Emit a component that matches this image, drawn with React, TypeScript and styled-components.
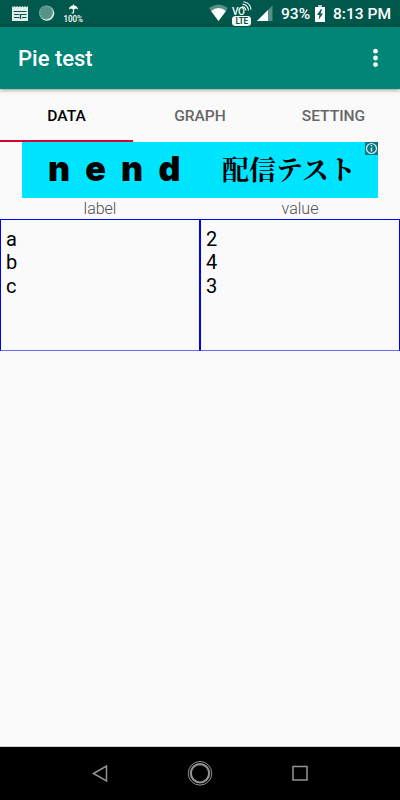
import React from "react";
import styled, { createGlobalStyle } from "styled-components";

const GlobalStyle = createGlobalStyle`
  * { box-sizing: border-box; }
  body { margin: 0; background: #fafafa; font-family: Roboto, sans-serif; }
`;

const Screen = styled.div`
  width: 400px;
  height: 800px;
  display: flex;
  flex-direction: column;
  overflow: hidden;
  background: #fafafa;
  color: #000;
`;

const StatusBar = styled.header`
  height: 27px;
  flex: none;
  display: flex;
  justify-content: space-between;
  background: #00574b;
  color: #fff;
`;

const StatusText = styled.span<{ $gap: number; $width: number }>`
  width: ${(p) => p.$width}px;
  margin-left: ${(p) => p.$gap}px;
  font-size: 15.55px;
  font-weight: 500;
  line-height: 29px;
  white-space: nowrap;
`;

const StatusGroup = styled.div`
  display: flex;
  height: 27px;
`;

const AppBar = styled.div`
  height: 62px;
  flex: none;
  display: flex;
  align-items: center;
  justify-content: space-between;
  padding: 0 20px 0 18px;
  background: #008577;
  color: #fff;
  box-shadow: 0 1px 4px rgba(0, 0, 0, 0.42);
`;

const Title = styled.h1`
  margin: 2px 0 0;
  font-size: 22px;
  font-weight: 500;
  line-height: 28px;
`;

const MenuButton = styled.button`
  display: flex;
  padding: 0;
  border: 0;
  background: none;
  color: #fff;
`;

const Tabs = styled.nav`
  height: 53px;
  flex: none;
  display: grid;
  grid-template-columns: 133px 134px 133px;
`;

const Tab = styled.button<{ $active?: boolean }>`
  padding: 3px 0 0;
  border: 0;
  border-bottom: 2px solid ${(p) => (p.$active ? "#dc0038" : "transparent")};
  background: none;
  color: ${(p) => (p.$active ? "#000" : "#666")};
  font: 500 15.55px/20px Roboto, sans-serif;
`;

const Banner = styled.section`
  position: relative;
  width: 356px;
  height: 56px;
  flex: none;
  margin-left: 22px;
  display: flex;
  background: #00e5ff;
`;

const BannerName = styled.span`
  width: 200px;
  padding-left: 26px;
  font: 900 34px/54px Inter, sans-serif;
  letter-spacing: 15.2px;
  white-space: nowrap;
`;

const BannerMessage = styled.span`
  font: 700 27px/54px "Noto Serif CJK JP", "Noto Sans CJK JP", serif;
  white-space: nowrap;
`;

const InfoBadge = styled.span`
  position: absolute;
  top: 0;
  right: 0;
  display: flex;
  background: #087785;
`;

const Columns = styled.main`
  display: grid;
  grid-template-columns: 1fr 1fr;
`;

const Heading = styled.div`
  height: 21px;
  color: #505050;
  font-size: 16px;
  font-weight: 300;
  line-height: 22px;
  text-align: center;
`;

const Values = styled.div`
  height: 132px;
  padding: 8px 5px;
  border: 1px solid #0000f5;
  border-bottom-color: #6c6cf3;
  font-size: 20px;
  line-height: 23.4px;
  white-space: pre-line;
`;

const NavigationBar = styled.footer`
  height: 54px;
  flex: none;
  margin-top: auto;
  display: grid;
  grid-template-columns: repeat(4, 100px);
  border-top: 1px solid #d0d0d0;
  background: #000;
`;

const NavButton = styled.button`
  display: flex;
  width: 28px;
  padding: 12px 0 0;
  margin-left: 86px;
  border: 0;
  background: none;
`;

const columns = [
  { name: "label", values: ["a", "b", "c"] },
  { name: "value", values: ["2", "4", "3"] },
];

function Notifications() {
  return (
    <svg width="100" height="27" fill="none">
      <path d="M12 6l1.3 1.3L14.6 6l1.3 1.3L17.2 6l1.3 1.3L19.8 6l1.3 1.3L22.4 6l1.3 1.3L25 6l1.3 1.3L28 6v15H12z" fill="#e3eeeb" />
      <path d="M13.5 11.5h13M14 14.5h5.5M14 17.5h5.5M21 14.5h5.5M22 17.5h4.5M20.5 14v5" stroke="#00574b" strokeWidth="1.2" />
      <circle cx="46.8" cy="13.3" r="7.5" fill="#e3eeeb" />
      <circle cx="46" cy="12.5" r="7" fill="#549389" />
      <circle cx="46" cy="12.5" r="6.2" stroke="#83b2aa" strokeDasharray="1.5 1.5" />
      <path d="M69 9.5c0-5.5 9-5.5 9 0l-2-1-2.5 1-2.5-1z" fill="#fff" />
      <path d="M73.5 4.5v7.5q0 1.5-1.8.8" stroke="#fff" strokeWidth="1.2" />
      <text x="63.5" y="22" fill="#fff" fontFamily="Roboto, sans-serif" fontSize="9.2" fontWeight="500" textLength="19.5" lengthAdjust="spacingAndGlyphs">100%</text>
    </svg>
  );
}

function Signals() {
  return (
    <svg width="68" height="27" fill="none">
      <path d="M3 8Q12.5 1 22 8L12.5 21z" fill="#568f87" />
      <path d="M5 11Q12.5 5 20 11L12.5 21z" fill="#fff" />
      <text x="26" y="15" fill="#fff" fontFamily="Roboto, sans-serif" fontSize="10" fontWeight="500" textLength="13">VO</text>
      <path d="M36 6.5q3.5.5 4 4M36.5 4q5.5 1 6 6.5M37.5 1.8q7 1 7.5 8" stroke="#fff" strokeWidth="1.1" />
      <rect x="26" y="16" width="19" height="10" rx="3.5" fill="#fff" />
      <text x="29.5" y="24" fill="#00574b" fontFamily="Roboto, sans-serif" fontSize="8.2" fontWeight="700" textLength="12.5">LTE</text>
      <path d="M51 21L66.5 5.5V21z" fill="#568f87" />
      <path d="M51 21L62 10v11z" fill="#fff" />
    </svg>
  );
}

export default function App() {
  return (
    <>
      <GlobalStyle />
      <Screen>
        <StatusBar>
          <Notifications />
          <StatusGroup>
            <Signals />
            <StatusText $gap={7} $width={33}>93%</StatusText>
            <svg width="15" height="27">
              <path d="M4 7V5h4v2H4z" fill="#b0cec9" />
              <path d="M1 7h10v15H1z" fill="#fff" />
              <path d="M7 9L3 15h2.5L4.5 20 9 13.5H6.5L8 9z" fill="#00574b" />
            </svg>
            <StatusText $gap={4} $width={67}>8:13 PM</StatusText>
          </StatusGroup>
        </StatusBar>
        <AppBar>
          <Title>Pie test</Title>
          <MenuButton aria-label="More options">
            <svg width="9" height="24" fill="currentColor">
              <circle cx="4.5" cy="5.2" r="2.4" />
              <circle cx="4.5" cy="12" r="2.4" />
              <circle cx="4.5" cy="18.6" r="2.4" />
            </svg>
          </MenuButton>
        </AppBar>
        <Tabs>
          <Tab $active>DATA</Tab>
          <Tab>GRAPH</Tab>
          <Tab>SETTING</Tab>
        </Tabs>
        <Banner>
          <BannerName>nend</BannerName>
          <BannerMessage>配信テスト</BannerMessage>
          <InfoBadge>
            <svg width="13" height="13" fill="none" stroke="#d8edef">
              <circle cx="6.5" cy="6.5" r="5" strokeWidth="1.2" />
              <path d="M6.5 5.5v4M6.5 3v1.3" strokeWidth="1.5" />
            </svg>
          </InfoBadge>
        </Banner>
        <Columns>
          {columns.map((column) => (
            <div key={column.name}>
              <Heading>{column.name}</Heading>
              <Values>{column.values.join("\n")}</Values>
            </div>
          ))}
        </Columns>
        <NavigationBar>
          <NavButton aria-label="Back">
            <svg width="28" height="28"><path d="M7.5 14.5L20.5 7v15z" fill="none" stroke="#939393" strokeWidth="1.5" /></svg>
          </NavButton>
          <NavButton aria-label="Home">
            <svg width="28" height="28" fill="none" stroke="#939393">
              <circle cx="14" cy="14.3" r="11.8" />
              <circle cx="14" cy="14.3" r="9.2" strokeWidth="2.2" />
            </svg>
          </NavButton>
          <NavButton aria-label="Recent apps">
            <svg width="28" height="28"><rect x="7" y="7.5" width="14" height="13.5" fill="none" stroke="#939393" strokeWidth="1.5" /></svg>
          </NavButton>
        </NavigationBar>
      </Screen>
    </>
  );
}
